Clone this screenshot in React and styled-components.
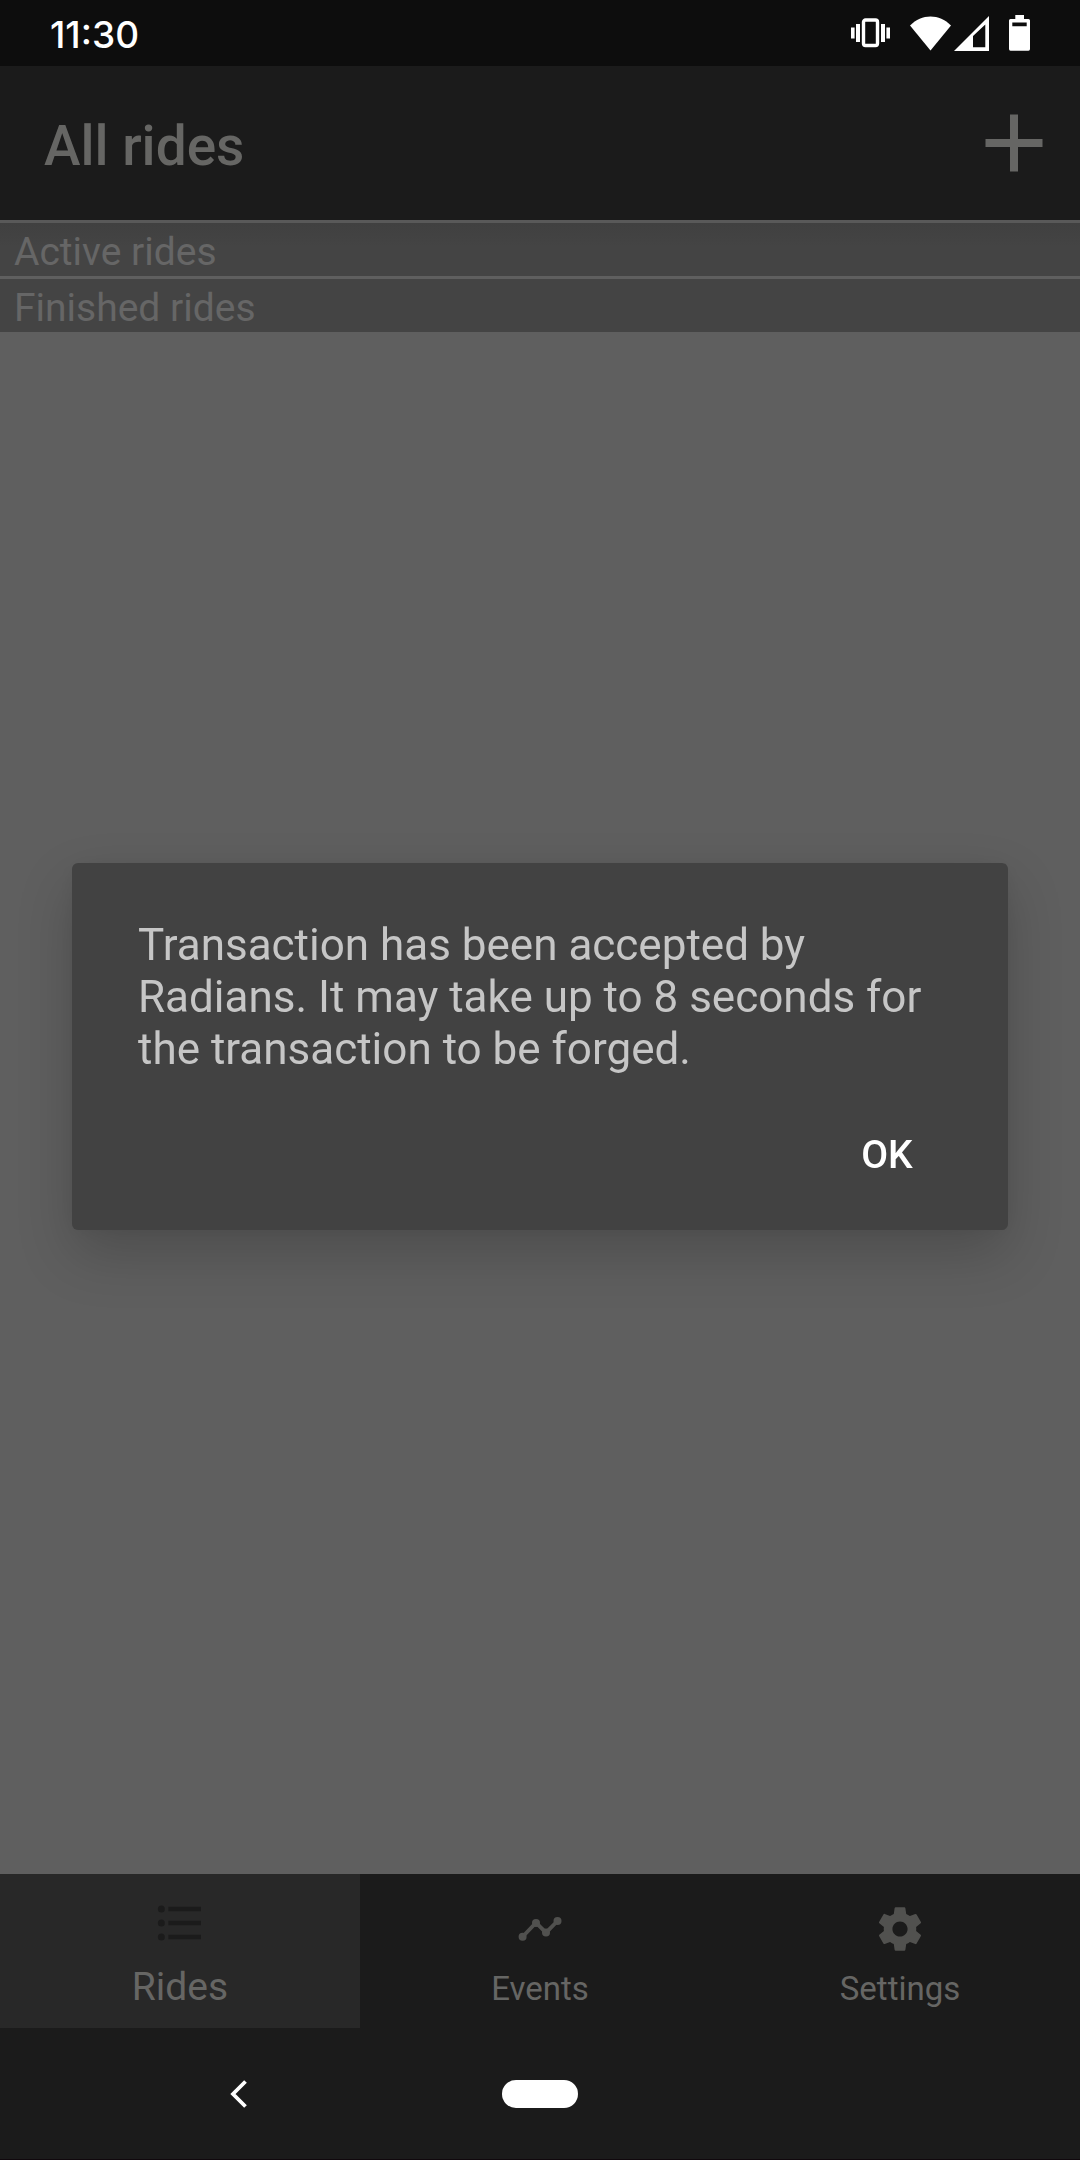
import React from "react";
import styled, { createGlobalStyle } from "styled-components";

const GlobalStyle = createGlobalStyle`
  *, *::before, *::after { box-sizing: border-box; }
  body {
    margin: 0;
    background: #5f5f5f;
    font-family: Roboto, "Liberation Sans", sans-serif;
  }
  h1, h2, p { margin: 0; font-weight: 400; }
  button {
    margin: 0;
    padding: 0;
    border: 0;
    background: none;
    color: inherit;
    font: inherit;
    cursor: pointer;
  }
  svg { display: block; }
`;

const Screen = styled.div`
  display: flex;
  flex-direction: column;
  min-height: 100vh;
`;

const StatusBar = styled.div`
  display: flex;
  align-items: center;
  justify-content: space-between;
  height: 66px;
  padding: 0 50px;
  background: #0d0d0d;
  color: #ffffff;
`;

const Clock = styled.time`
  padding-top: 4px;
  font-family: Inter, Roboto, sans-serif;
  font-size: 37px;
  font-weight: 500;
  line-height: 44px;
`;

const StatusIcons = styled.div`
  display: flex;
  align-items: center;
  gap: ${({ $gap }) => $gap}px;
`;

const Header = styled.header`
  display: flex;
  align-items: center;
  justify-content: space-between;
  height: 154px;
  padding: 0 17px 0 44px;
  background: #1b1b1b;
  color: #666664;
`;

const Title = styled.h1`
  padding-top: 6px;
  font-size: 55px;
  font-weight: 500;
  line-height: 64px;
`;

const Rides = styled.main`
  flex: 1;
`;

const SectionHeading = styled.h2`
  padding: 5px 14px 0;
  border-top: 3px solid ${({ $first }) => ($first ? "#595959" : "#5f5f5f")};
  background: ${({ $first }) =>
    $first ? "linear-gradient(#404040, #444444 24px)" : "#444444"};
  color: #666666;
  font-size: 39px;
  line-height: 48px;
`;

const TabBar = styled.nav`
  display: grid;
  grid-template-columns: repeat(3, 1fr);
  height: 154px;
  background: #1b1b1b;
`;

const Tab = styled.button`
  display: flex;
  flex-direction: column;
  align-items: center;
  justify-content: flex-end;
  gap: 13px;
  padding-bottom: 18px;
  background: ${({ $active }) => ($active ? "#282828" : "transparent")};
  color: ${({ $active }) => ($active ? "#1b1b1b" : "#51514f")};
`;

const TabLabel = styled.span`
  color: #666664;
  font-size: ${({ $active }) => ($active ? 39 : 33)}px;
  line-height: ${({ $active }) => ($active ? 46 : 42)}px;
`;

const SystemNav = styled.nav`
  display: grid;
  grid-template-columns: repeat(3, 1fr);
  height: 132px;
  padding: 0 88px;
  border-bottom: 1px solid #10080d;
  background: #1b1b1b;
  color: #ffffff;
`;

const SystemButton = styled.button`
  display: flex;
  align-items: center;
  justify-content: center;
`;

const HomePill = styled.span`
  width: 76px;
  height: 28px;
  border-radius: 14px;
  background: #ffffff;
`;

const Overlay = styled.div`
  position: fixed;
  inset: 66px 0 133px;
  display: flex;
  align-items: center;
  padding: 0 72px;
`;

const Dialog = styled.div`
  flex: 1;
  padding: 56px 33px 26px 66px;
  border-radius: 6px;
  background: #424242;
  box-shadow: 0 24px 56px rgba(0, 0, 0, 0.19), 0 0 20px rgba(0, 0, 0, 0.05);
`;

const Message = styled.p`
  padding-right: 33px;
  color: #c6c6c6;
  font-size: 44px;
  line-height: 52px;
`;

const Actions = styled.div`
  display: flex;
  justify-content: flex-end;
  padding-top: 30px;
`;

const ActionButton = styled.button`
  width: 176px;
  height: 99px;
  color: #ffffff;
  font-size: 39px;
  font-weight: 500;
  line-height: 46px;
`;

const VibrateIcon = () => (
  <svg width="39" height="30" viewBox="0 0 39 30" fill="currentColor" aria-hidden="true">
    <rect x="12.5" y="2" width="14" height="25.5" rx="2" fill="none" stroke="currentColor" strokeWidth="3.4" />
    <rect x="5" y="6" width="4" height="18" />
    <rect x="0" y="9.5" width="3.6" height="11" />
    <rect x="30" y="6" width="4" height="18" />
    <rect x="35.4" y="9.5" width="3.6" height="11" />
  </svg>
);

const WifiIcon = () => (
  <svg width="41" height="35" viewBox="0 0 41 35" fill="currentColor" aria-hidden="true">
    <path d="M20.5 34.5 0 9.5C6 3.4 13 .4 20.5 .4S35 3.4 41 9.5Z" />
  </svg>
);

const SignalIcon = () => (
  <svg width="35" height="35" viewBox="0 0 35 35" fill="currentColor" aria-hidden="true">
    <path fillRule="evenodd" d="M0 35 35 0V35ZM19 20V31.3H31.3V8.5Z" />
  </svg>
);

const BatteryIcon = () => (
  <svg width="21" height="36" viewBox="0 0 21 36" fill="currentColor" aria-hidden="true">
    <path
      fillRule="evenodd"
      d="M6.3 0H15V4H19.5Q21 4 21 5.5V34Q21 35.7 19.5 35.7H1.5Q0 35.7 0 34V5.5Q0 4 1.5 4H6.3ZM3.3 7.4V11.3H17.7V7.4Z"
    />
  </svg>
);

const PlusIcon = () => (
  <svg width="98" height="98" viewBox="0 0 98 98" fill="currentColor" aria-hidden="true">
    <path d="M45 20.5H53V45H77.5V53H53V77.5H45V53H20.5V45H45Z" />
  </svg>
);

const ListIcon = () => (
  <svg width="56" height="56" viewBox="0 0 24 24" fill="currentColor" aria-hidden="true">
    <circle cx="4" cy="6" r="1.5" />
    <circle cx="4" cy="12" r="1.5" />
    <circle cx="4" cy="18" r="1.5" />
    <path d="M7 5h14v2H7zM7 11h14v2H7zM7 17h14v2H7z" />
  </svg>
);

const TimelineIcon = () => (
  <svg width="52" height="52" viewBox="0 0 52 52" fill="currentColor" aria-hidden="true">
    <path d="M8.6 33.7 22 19.7 32 29.7 43.5 18" fill="none" stroke="currentColor" strokeWidth="3.8" />
    <circle cx="8.6" cy="33.7" r="4" />
    <circle cx="22" cy="20" r="4" />
    <circle cx="32" cy="29.5" r="4" />
    <circle cx="43.5" cy="18" r="4" />
  </svg>
);

const GearIcon = () => (
  <svg width="52" height="52" viewBox="0 0 24 24" fill="currentColor" aria-hidden="true">
    <path d="M19.43 12.98c.04-.32.07-.64.07-.98s-.03-.66-.07-.98l2.11-1.65c.19-.15.24-.42.12-.64l-2-3.46c-.12-.22-.39-.3-.61-.22l-2.49 1c-.52-.4-1.08-.73-1.69-.98l-.38-2.65C14.46 2.18 14.25 2 14 2h-4c-.25 0-.46.18-.49.42l-.38 2.65c-.61.25-1.17.59-1.69.98l-2.49-1c-.23-.09-.49 0-.61.22l-2 3.46c-.13.22-.07.49.12.64l2.11 1.65c-.04.32-.07.65-.07.98s.03.66.07.98l-2.11 1.65c-.19.15-.24.42-.12.64l2 3.46c.12.22.39.3.61.22l2.49-1c.52.4 1.08.73 1.69.98l.38 2.65c.03.24.24.42.49.42h4c.25 0 .46-.18.49-.42l.38-2.65c.61-.25 1.17-.59 1.69-.98l2.49 1c.23.09.49 0 .61-.22l2-3.46c.12-.22.07-.49-.12-.64l-2.11-1.65zM12 15.5c-1.93 0-3.5-1.57-3.5-3.5s1.57-3.5 3.5-3.5 3.5 1.57 3.5 3.5-1.57 3.5-3.5 3.5z" />
  </svg>
);

const BackIcon = () => (
  <svg width="17" height="28" viewBox="0 0 17 28" fill="none" stroke="currentColor" strokeWidth="3.8" aria-hidden="true">
    <path d="M15.5 1.5 3 14 15.5 26.5" />
  </svg>
);

const tabs = [
  { label: "Rides", Icon: ListIcon, active: true },
  { label: "Events", Icon: TimelineIcon, active: false },
  { label: "Settings", Icon: GearIcon, active: false },
];

export default function App() {
  return (
    <>
      <GlobalStyle />
      <Screen>
        <StatusBar>
          <Clock>11:30</Clock>
          <StatusIcons $gap={20}>
            <VibrateIcon />
            <StatusIcons $gap={3}>
              <WifiIcon />
              <SignalIcon />
            </StatusIcons>
            <BatteryIcon />
          </StatusIcons>
        </StatusBar>
        <Header>
          <Title>All rides</Title>
          <button type="button" aria-label="Add ride">
            <PlusIcon />
          </button>
        </Header>
        <Rides>
          <SectionHeading $first>Active rides</SectionHeading>
          <SectionHeading>Finished rides</SectionHeading>
        </Rides>
        <TabBar>
          {tabs.map(({ label, Icon, active }) => (
            <Tab key={label} type="button" $active={active} aria-current={active ? "page" : undefined}>
              <Icon />
              <TabLabel $active={active}>{label}</TabLabel>
            </Tab>
          ))}
        </TabBar>
        <SystemNav>
          <SystemButton type="button" aria-label="Back">
            <BackIcon />
          </SystemButton>
          <SystemButton type="button" aria-label="Home">
            <HomePill />
          </SystemButton>
        </SystemNav>
      </Screen>
      <Overlay>
        <Dialog role="alertdialog" aria-modal="true" aria-describedby="dialog-message">
          <Message id="dialog-message">
            Transaction has been accepted by Radians. It may take up to 8 seconds for the transaction to be forged.
          </Message>
          <Actions>
            <ActionButton type="button">OK</ActionButton>
          </Actions>
        </Dialog>
      </Overlay>
    </>
  );
}
